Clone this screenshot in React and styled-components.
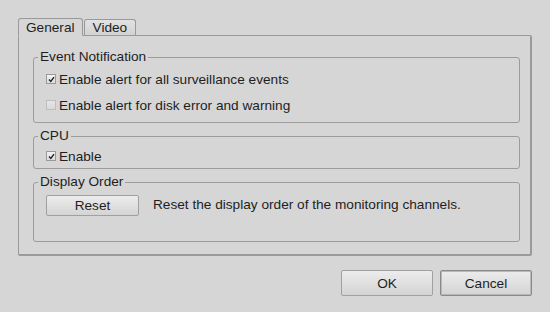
import React from "react";
import styled, { createGlobalStyle } from "styled-components";

const Global = createGlobalStyle`
  html, body { margin: 0; padding: 0; background: #d6d6d6; }
  body { font-family: "Liberation Sans", Arial, sans-serif; font-size: 13.65px; color: #1e1e1e; }
`;

const Dialog = styled.div`
  width: 550px;
  height: 312px;
  box-sizing: border-box;
  padding: 18px 18px 0 18px;
  display: flex;
  flex-direction: column;
`;

const TabBar = styled.div`
  display: flex;
  align-items: flex-end;
  height: 18px;
  margin-bottom: -1px;
  position: relative;
  z-index: 1;
`;

const Tab = styled.div`
  box-sizing: border-box;
  height: ${(p) => (p.$active ? 18 : 16)}px;
  padding: 0 ${(p) => (p.$active ? 7 : 8)}px;
  margin-left: ${(p) => (p.$active ? 0 : 1)}px;
  margin-bottom: ${(p) => (p.$active ? 0 : 1)}px;
  border: 1px solid #999;
  border-bottom: ${(p) => (p.$active ? "1px solid #d6d6d6" : "none")};
  border-radius: 3px 3px 0 0;
  background: ${(p) => (p.$active ? "#d6d6d6" : "linear-gradient(#e2e2e2, #d2d2d2)")};
  line-height: ${(p) => (p.$active ? 17 : 15)}px;
  white-space: nowrap;
`;

const Panel = styled.div`
  box-sizing: border-box;
  width: 514px;
  border: 1px solid #9a9a9a;
  border-right-width: 2px;
  border-bottom-width: 2px;
  border-radius: 0 2px 2px 2px;
  padding: 14px 10px 12px 14px;
  display: flex;
  flex-direction: column;
  gap: 6px;
`;

const Group = styled.fieldset`
  margin: 0;
  padding: 0;
  border: 1px solid #9c9c9c;
  border-radius: 3px;
  min-width: 0;
`;

const Legend = styled.legend`
  margin-left: 4px;
  padding: 0 2px;
  line-height: 14px;
  font-size: 13.65px;
`;

const GroupBody = styled.div`
  display: flex;
  flex-direction: ${(p) => (p.$row ? "row" : "column")};
  align-items: ${(p) => (p.$row ? "center" : "stretch")};
  gap: ${(p) => p.$gap || 0}px;
  padding: ${(p) => p.$pad};
`;

const CheckRow = styled.label`
  display: flex;
  align-items: center;
  height: 20px;
  gap: 3px;
`;

const Box = styled.span`
  box-sizing: border-box;
  width: 10px;
  height: 10px;
  border: 1px solid ${(p) => (p.$checked ? "#9a9a9a" : "#bdbdbd")};
  background: ${(p) => (p.$checked ? "linear-gradient(#f2f2f2, #dcdcdc)" : "linear-gradient(#e6e6e6, #d8d8d8)")};
  display: flex;
  align-items: center;
  justify-content: center;
`;

const Button = styled.button`
  box-sizing: border-box;
  width: ${(p) => p.$w}px;
  height: ${(p) => p.$h}px;
  font-family: inherit;
  font-size: 13.65px;
  color: #1e1e1e;
  border: 1px solid ${(p) => (p.$default ? "#8a8a8a" : "#a0a0a0")};
  border-radius: 2px;
  background: linear-gradient(#ececec, #d4d4d4);
  box-shadow: ${(p) => (p.$default ? "inset 0 0 0 1px #b8b8b8" : "none")};
  padding: 0;
  flex-shrink: 0;
`;

const Note = styled.span`
  margin-top: -3px;
`;

const Footer = styled.div`
  display: flex;
  justify-content: flex-end;
  gap: 7px;
  margin-top: 14px;
`;

function Check({ checked, children }) {
  return (
    <CheckRow>
      <Box $checked={checked}>
        {checked && (
          <svg width="7" height="7" viewBox="0 0 7 7">
            <path d="M1 3.6 L2.8 5.4 L6 1.2" fill="none" stroke="#222" strokeWidth="1.4" />
          </svg>
        )}
      </Box>
      {children}
    </CheckRow>
  );
}

export default function App() {
  return (
    <>
      <Global />
      <Dialog>
        <TabBar>
          <Tab $active>General</Tab>
          <Tab>Video</Tab>
        </TabBar>
        <Panel>
          <Group>
            <Legend>Event Notification</Legend>
            <GroupBody $pad="5px 0 7px 12px" $gap={6}>
              <Check checked>Enable alert for all surveillance events</Check>
              <Check>Enable alert for disk error and warning</Check>
            </GroupBody>
          </Group>
          <Group>
            <Legend>CPU</Legend>
            <GroupBody $pad="3px 0 2px 12px">
              <Check checked>Enable</Check>
            </GroupBody>
          </Group>
          <Group>
            <Legend>Display Order</Legend>
            <GroupBody $row $pad="6px 0 25px 12px" $gap={14}>
              <Button $w={93} $h={21}>Reset</Button>
              <Note>Reset the display order of the monitoring channels.</Note>
            </GroupBody>
          </Group>
        </Panel>
        <Footer>
          <Button $w={92} $h={26}>OK</Button>
          <Button $w={92} $h={26} $default>Cancel</Button>
        </Footer>
      </Dialog>
    </>
  );
}
